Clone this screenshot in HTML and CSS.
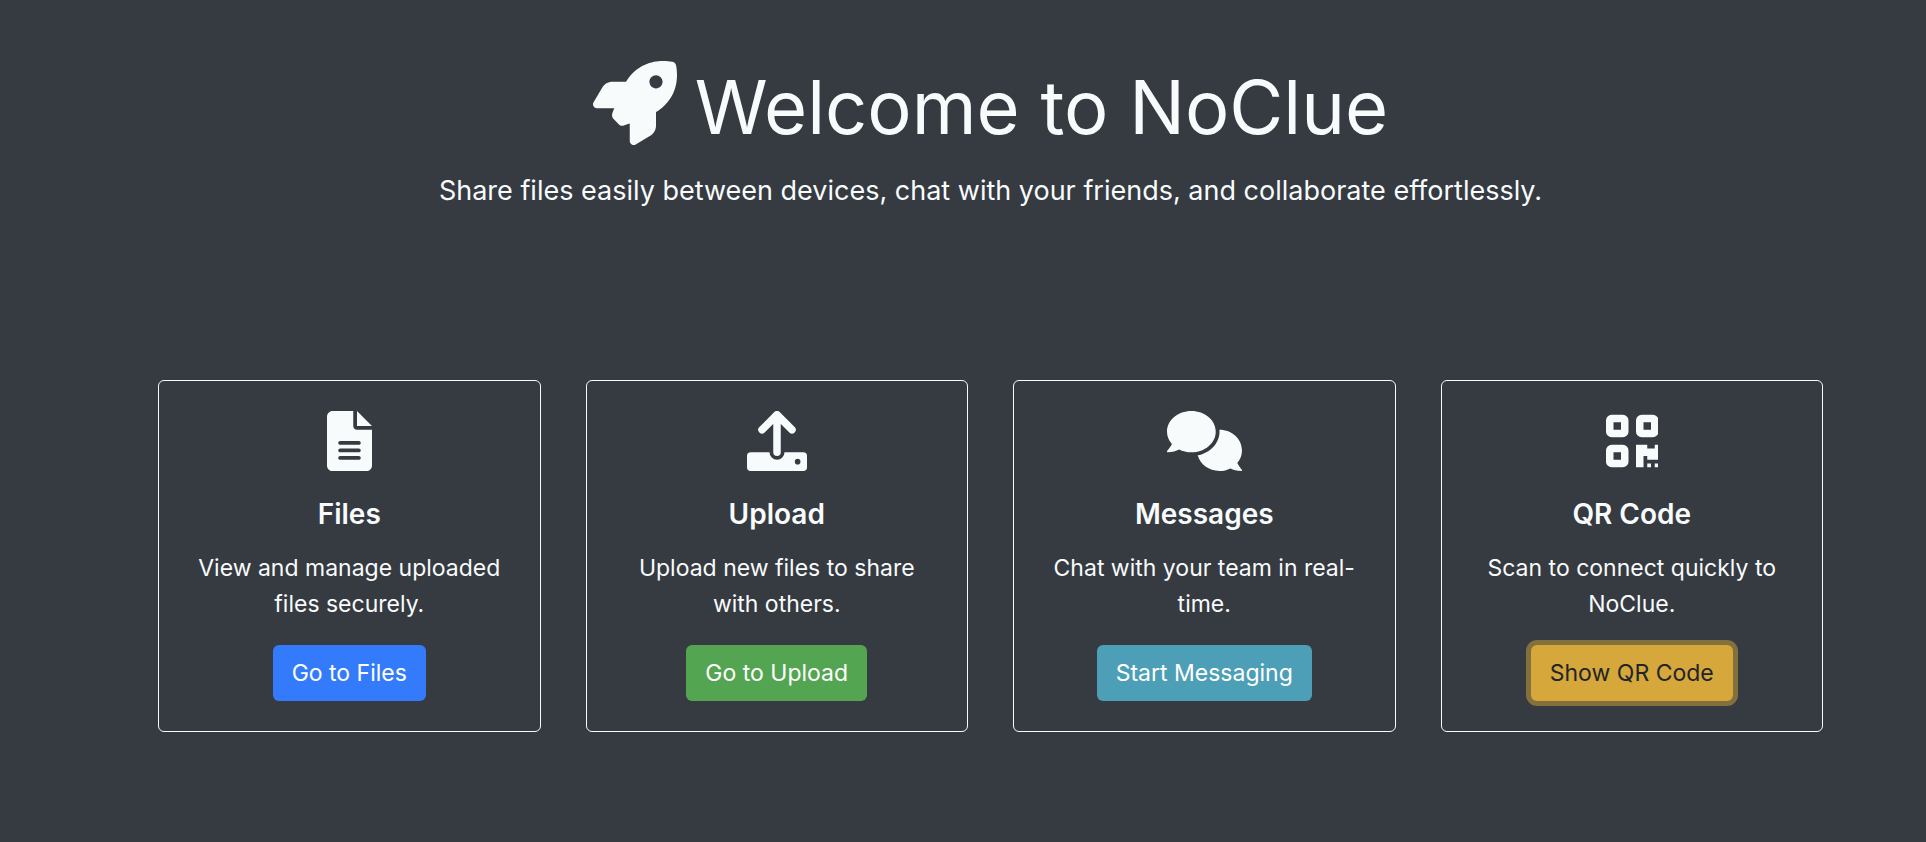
FILE: index.html
```html
<!DOCTYPE html>
<html lang="en">
<head>
<meta charset="utf-8">
<title>NoClue</title>
<link rel="stylesheet" href="styles.css">
</head>
<body>
<main class="page">
  <header class="hero">
    <h1 class="hero-title">
      <svg class="hero-icon" viewBox="0 0 512 512" aria-hidden="true"><path d="M156.6 384.9L125.7 353.1C117.2 345.5 114.2 333.1 117.1 321.8C120.1 312.9 124.1 301.3 129.8 288H24C15.38 288 7.414 283.4 3.146 275.9C-1.123 268.4-1.042 259.2 3.357 251.8L55.83 163.3C68.79 141.4 92.33 127.1 117.8 127.1H200C202.4 124 204.8 120.3 207.2 116.7C289.1-4.07 411.1-8.142 483.9 5.275C495.6 7.414 504.6 16.43 506.7 28.06C520.1 100.9 516.1 222.9 395.3 304.8C391.8 307.2 387.1 309.6 384 311.1V394.2C384 419.7 370.6 443.2 348.7 456.2L260.2 508.6C252.8 513 243.6 513.1 236.1 508.9C228.6 504.6 224 496.6 224 488V380.8C209.9 385.6 197.6 389.7 188.3 392.7C177.1 396.3 164.9 393.2 156.6 384.9zM384 167.1C406.1 167.1 424 150.1 424 127.1C424 105.9 406.1 87.1 384 87.1C361.9 87.1 344 105.9 344 127.1C344 150.1 361.9 167.1 384 167.1z"/></svg>
      <span>Welcome to NoClue</span>
    </h1>
    <p class="hero-lead">Share files easily between devices, chat with your friends, and collaborate effortlessly.</p>
  </header>
  <section class="cards">
    <article class="card">
      <svg class="card-icon" viewBox="0 0 384 512" aria-hidden="true"><path d="M256 0v128h128L256 0zM224 128V0H48C21.5 0 0 21.5 0 48v416c0 26.5 21.5 48 48 48h288c26.5 0 48-21.5 48-48V160H256c-17.7 0-32-14.3-32-32zM272 416H112c-8.8 0-16-7.2-16-16s7.2-16 16-16h160c8.8 0 16 7.2 16 16s-7.2 16-16 16zM272 352H112c-8.8 0-16-7.2-16-16s7.2-16 16-16h160c8.8 0 16 7.2 16 16s-7.2 16-16 16zM288 272c0 8.8-7.2 16-16 16H112c-8.8 0-16-7.2-16-16s7.2-16 16-16h160c8.8 0 16 7.2 16 16z"/></svg>
      <h2 class="card-title">Files</h2>
      <p class="card-text">View and manage uploaded files securely.</p>
      <button class="btn btn-primary" type="button">Go to Files</button>
    </article>
    <article class="card">
      <svg class="card-icon" viewBox="0 0 512 512" aria-hidden="true"><path d="M32 352h160a64 64 0 0 0 128 0h160a32 32 0 0 1 32 32v96a32 32 0 0 1-32 32H32a32 32 0 0 1-32-32v-96a32 32 0 0 1 32-32zM432 408a24 24 0 1 0 0 48a24 24 0 1 0 0-48z"/><path class="stroke" d="M256 32v320M128 160L256 32l128 128"/></svg>
      <h2 class="card-title">Upload</h2>
      <p class="card-text">Upload new files to share with others.</p>
      <button class="btn btn-success" type="button">Go to Upload</button>
    </article>
    <article class="card">
      <svg class="card-icon" viewBox="0 0 640 512" aria-hidden="true"><path d="M416 176C416 78.8 322.9 0 208 0S0 78.8 0 176c0 39.57 15.62 75.96 41.67 105.4c-16.39 32.76-39.23 57.32-39.59 57.68c-2.1 2.205-2.67 5.475-1.441 8.354C1.9 350.3 4.602 352 7.66 352c38.35 0 70.76-11.12 95.74-24.04C134.2 343.1 169.8 352 208 352C322.9 352 416 273.2 416 176zM599.6 443.7C624.8 413.9 640 376.6 640 336C640 238.8 554 160 448 160c-.3145 0-.6191.041-.9336.043C447.5 165.3 448 170.6 448 176c0 98.62-79.68 181.2-186.1 202.5C282.7 455.1 357.1 512 448 512c33.69 0 65.32-8.008 92.85-21.98C565.2 502 596.1 512 632.3 512c3.059 0 5.76-1.725 7.02-4.605c1.229-2.879.6582-6.148-1.441-8.354C637.6 498.7 615.9 475.3 599.6 443.7z"/></svg>
      <h2 class="card-title">Messages</h2>
      <p class="card-text">Chat with your team in real-time.</p>
      <button class="btn btn-info" type="button">Start Messaging</button>
    </article>
    <article class="card">
      <svg class="card-icon" viewBox="0 0 448 512" aria-hidden="true"><path fill-rule="evenodd" d="M48 32h96a48 48 0 0 1 48 48v96a48 48 0 0 1-48 48H48a48 48 0 0 1-48-48V80a48 48 0 0 1 48-48zM64 96v64h64V96zM304 32h96a48 48 0 0 1 48 48v96a48 48 0 0 1-48 48h-96a48 48 0 0 1-48-48V80a48 48 0 0 1 48-48zM320 96v64h64V96zM48 288h96a48 48 0 0 1 48 48v96a48 48 0 0 1-48 48H48a48 48 0 0 1-48-48v-96a48 48 0 0 1 48-48zM64 352v64h64v-64zM256 288h96v32h64v-32h32v128h-96v-32h-32v96h-64zM352 448h32v32h-32zM416 448h32v32h-32z"/></svg>
      <h2 class="card-title">QR Code</h2>
      <p class="card-text">Scan to connect quickly to NoClue.</p>
      <button class="btn btn-warning" type="button">Show QR Code</button>
    </article>
  </section>
</main>
</body>
</html>
```

FILE: styles.css
```css
* {
  box-sizing: border-box;
}

body {
  margin: 0;
  min-height: 100vh;
  background: #363a41;
  color: #f8fbfc;
  font-family: Inter, "Liberation Sans", sans-serif;
  font-size: 23px;
  line-height: 36px;
}

h1,
h2,
p {
  margin: 0;
}

.page {
  padding: 61px 103px 48px 158px;
}

.hero {
  text-align: center;
}

.hero-title {
  display: flex;
  justify-content: center;
  align-items: flex-start;
  gap: 18px;
  font-size: 74px;
  font-weight: 400;
  line-height: 92px;
}

.hero-icon {
  width: 84px;
  height: 84px;
  fill: currentColor;
}

.hero-lead {
  margin-top: 16px;
  font-size: 27px;
  font-weight: 400;
  line-height: 44px;
}

.cards {
  display: grid;
  grid-template-columns: repeat(4, 1fr);
  gap: 45px;
  margin-top: 167px;
}

.card {
  display: flex;
  flex-direction: column;
  align-items: center;
  padding: 30px 29px;
  border: 1px solid #f8fbfc;
  border-radius: 6px;
  text-align: center;
}

.card-icon {
  height: 60px;
  fill: currentColor;
}

.stroke {
  fill: none;
  stroke: currentColor;
  stroke-width: 64px;
  stroke-linecap: round;
  stroke-linejoin: round;
}

.card-title {
  margin-top: 25px;
  font-size: 28px;
  font-weight: 600;
  line-height: 36px;
}

.card-text {
  margin-top: 18px;
}

.btn {
  margin-top: 23px;
  padding: 9px 18px;
  border: 1px solid transparent;
  border-radius: 6px;
  color: #fff;
  font: inherit;
}

.btn-primary {
  background: #347bfb;
}

.btn-success {
  background: #54a551;
}

.btn-info {
  background: #4c9fb6;
}

.btn-warning {
  background: #d6a73a;
  color: #212529;
  box-shadow: 0 0 0 5px #83703d;
}
```
